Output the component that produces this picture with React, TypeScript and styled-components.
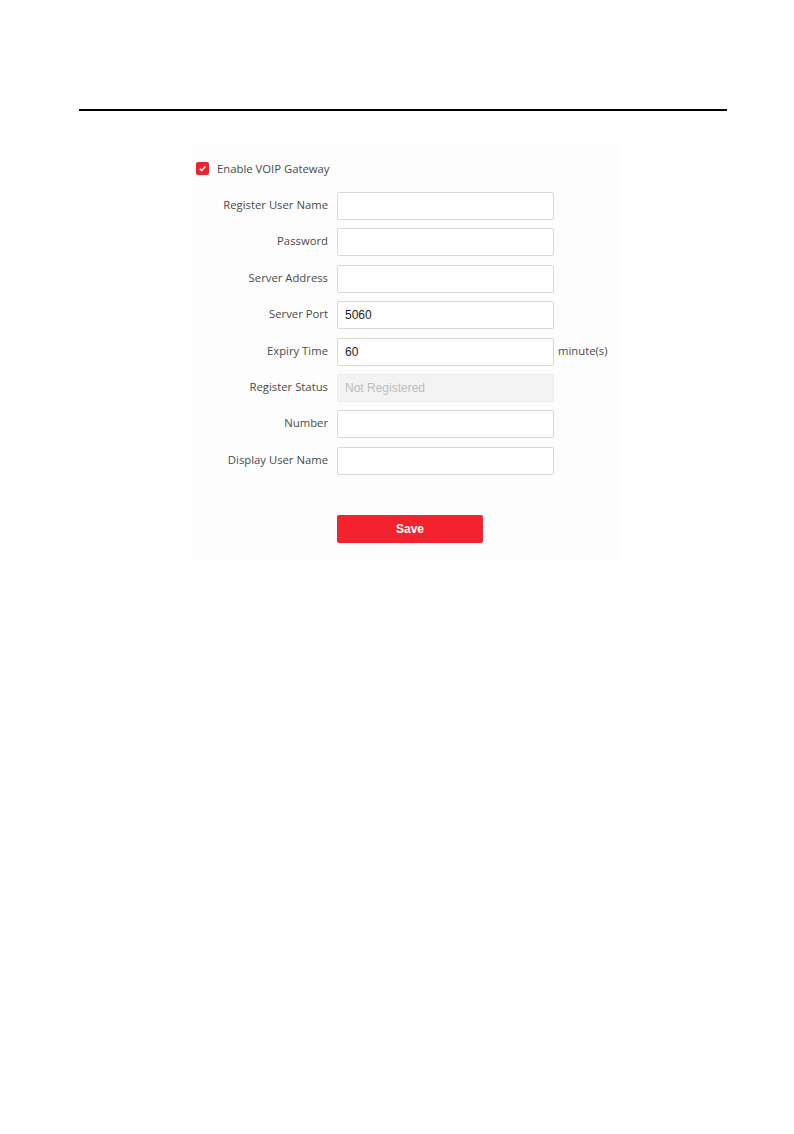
import React from 'react';
import styled, { createGlobalStyle } from 'styled-components';

const GlobalStyle = createGlobalStyle`
  body {
    margin: 0;
    background: #ffffff;
    font-family: "Open Sans", "Noto Sans", Arial, sans-serif;
  }
`;

const Page = styled.div`
  width: 794px;
  min-height: 1134px;
  background: #fff;
  padding-top: 109px;
  box-sizing: border-box;
`;

const Rule = styled.hr`
  margin: 0 0 0 79px;
  width: 648px;
  height: 2px;
  border: none;
  background: #000;
`;

const Panel = styled.div`
  margin: 34px 0 0 192px;
  width: 430px;
  box-sizing: border-box;
  background: #fdfdfd;
  padding: 17px 0 16px 4px;
  display: flex;
  flex-direction: column;
`;

const CheckRow = styled.label`
  display: flex;
  align-items: center;
  gap: 8px;
  height: 13px;
  font-size: 11.3px;
  color: #4a4a4a;
`;

const Box = styled.span`
  width: 13px;
  height: 13px;
  border-radius: 2px;
  background: #e8262f;
  display: flex;
  align-items: center;
  justify-content: center;
`;

const Fields = styled.div`
  display: flex;
  flex-direction: column;
  gap: 8.4px;
  margin-top: 17px;
`;

const Row = styled.div`
  display: grid;
  grid-template-columns: 132px 217px auto;
  column-gap: 9px;
  align-items: center;
  height: 28px;
`;

const Label = styled.span`
  text-align: right;
  font-size: 11.3px;
  color: #4a4a4a;
  padding-bottom: 3px;
`;

const Input = styled.div<{ $disabled?: boolean }>`
  height: 28px;
  box-sizing: border-box;
  border: 1px solid ${p => (p.$disabled ? '#ececec' : '#d9d9d9')};
  border-radius: 2px;
  background: ${p => (p.$disabled ? '#f3f3f3' : '#fff')};
  color: ${p => (p.$disabled ? '#bdbdbd' : '#222')};
  font-family: "Liberation Sans", Arial, sans-serif;
  font-size: 12px;
  display: flex;
  align-items: center;
  padding-left: 7px;
`;

const Unit = styled.span`
  font-size: 11.3px;
  color: #4a4a4a;
  margin-left: -5px;
  padding-bottom: 2px;
`;

const Actions = styled.div`
  margin-top: 40px;
  padding-left: 141px;
`;

const SaveButton = styled.button`
  width: 146px;
  height: 28px;
  border: none;
  border-radius: 2px;
  background: #f4222d;
  color: #fff;
  font-family: "Liberation Sans", Arial, sans-serif;
  font-weight: bold;
  font-size: 12px;
`;

const fields: { label: string; value?: string; disabled?: boolean; unit?: string }[] = [
  { label: 'Register User Name' },
  { label: 'Password' },
  { label: 'Server Address' },
  { label: 'Server Port', value: '5060' },
  { label: 'Expiry Time', value: '60', unit: 'minute(s)' },
  { label: 'Register Status', value: 'Not Registered', disabled: true },
  { label: 'Number' },
  { label: 'Display User Name' }
];

export default function App() {
  return (
    <Page>
      <GlobalStyle />
      <Rule />
      <Panel>
        <CheckRow>
          <Box>
            <svg width="9" height="9" viewBox="0 0 10 10">
              <path d="M2 5.2 L4.2 7.3 L8.2 2.8" fill="none" stroke="#fff" strokeWidth="1.6" />
            </svg>
          </Box>
          Enable VOIP Gateway
        </CheckRow>
        <Fields>
          {fields.map(f => (
            <Row key={f.label}>
              <Label>{f.label}</Label>
              <Input $disabled={f.disabled}>{f.value}</Input>
              {f.unit && <Unit>{f.unit}</Unit>}
            </Row>
          ))}
        </Fields>
        <Actions>
          <SaveButton>Save</SaveButton>
        </Actions>
      </Panel>
    </Page>
  );
}
